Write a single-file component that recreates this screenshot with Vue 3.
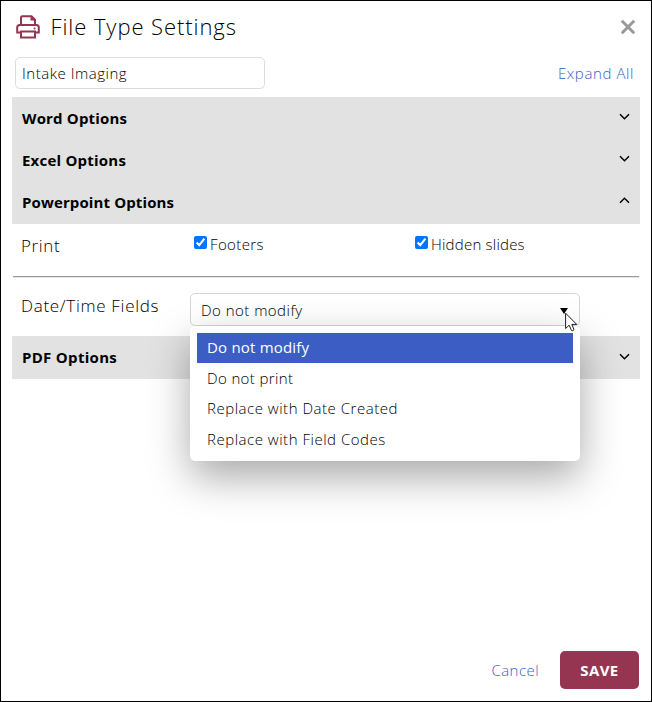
<script setup>
import { ref } from 'vue'

const profile = ref('Intake Imaging')
const footers = ref(true)
const hidden = ref(true)
const selected = ref('Do not modify')
const choices = [
  { label: 'Do not modify', cls: 'c-modify' },
  { label: 'Do not print', cls: 'c-print' },
  { label: 'Replace with Date Created', cls: 'c-date' },
  { label: 'Replace with Field Codes', cls: 'c-codes' },
]
const sections = [
  { title: 'Word Options', cls: 's-word', open: false },
  { title: 'Excel Options', cls: 's-excel', open: false },
  { title: 'Powerpoint Options', cls: 's-ppt', open: true },
]
</script>

<template>
  <div class="dialog">
    <header class="head">
      <svg class="printer" width="24" height="24" viewBox="0 0 24 24" fill="none" stroke="#953551" stroke-width="2">
        <path d="M5 10V2.5Q5 1.2 6.3 1.2H15.5L19 4.7V10" />
        <path d="M14.5 1V5.5H19.5L15.5 1Z" fill="#953551" stroke="none" />
        <path d="M5 17.5H1.2V12.5Q1.2 10 3.7 10H20.3Q22.8 10 22.8 12.5V17.5H19" />
        <path d="M5 16.5H19V22.6H5Z" />
        <circle cx="18.6" cy="13.5" r="1" fill="#953551" stroke="none" />
      </svg>
      <h1><span>File Type Settings</span></h1>
      <svg class="close" width="16" height="16" viewBox="0 0 16 16" stroke="#999" stroke-width="3">
        <path d="M1.8 1.8L14.2 14.2M14.2 1.8L1.8 14.2" />
      </svg>
    </header>

    <div class="tools">
      <input v-model="profile" class="profile" type="text" />
      <a class="expand">Expand All</a>
    </div>

    <div class="groups">
      <div v-for="s in sections" :key="s.title" class="bar">
        <span :class="s.cls">{{ s.title }}</span>
        <svg width="11" height="7" viewBox="0 0 11 7" fill="none" stroke="#000" stroke-width="1.5">
          <path :d="s.open ? 'M1 5.7L5.5 1.3L10 5.7' : 'M1 1.3L5.5 5.7L10 1.3'" />
        </svg>
      </div>
    </div>

    <div class="row print">
      <span class="label l-print">Print</span>
      <label class="check first"><input v-model="footers" type="checkbox" /><span class="t-foot">Footers</span></label>
      <label class="check"><input v-model="hidden" type="checkbox" /><span class="t-hidden">Hidden slides</span></label>
    </div>
    <div class="rule"></div>
    <div class="row dates">
      <span class="label l-date">Date/Time Fields</span>
      <div class="select">
        <span class="c-modify">{{ selected }}</span>
        <svg class="caret" width="8" height="6" viewBox="0 0 8 6"><path d="M0 0H8L4 6Z" /></svg>
        <ul class="menu">
          <li v-for="c in choices" :key="c.label" :class="{ on: c.label === selected }">
            <span :class="c.cls">{{ c.label }}</span>
          </li>
        </ul>
        <svg class="pointer" width="13" height="20" viewBox="0 0 13 20" fill="#fff" stroke="#1c1c28" stroke-width="1">
          <path d="M.6 1.2V16.5L4.2 13.2L6.5 18.5Q7.7 19.3 9 17.6L6.8 12.4H11.7Z" />
        </svg>
      </div>
    </div>

    <div class="bar pdf">
      <span class="s-pdf">PDF Options</span>
      <svg width="11" height="7" viewBox="0 0 11 7" fill="none" stroke="#000" stroke-width="1.5">
        <path d="M1 1.3L5.5 5.7L10 1.3" />
      </svg>
    </div>

    <footer class="foot">
      <a class="cancel">Cancel</a>
      <button class="save">SAVE</button>
    </footer>
  </div>
</template>

<style>
body { margin: 0; background: #fff; }
</style>

<style scoped>
* { box-sizing: border-box; }
.dialog {
  width: 652px; height: 702px; border: 1px solid #000; background: #fff; color: #000;
  display: flex; flex-direction: column;
  font: 300 15px/20px "Open Sans", "Noto Sans", sans-serif;
  white-space: nowrap;
}
.head { height: 56px; display: flex; align-items: flex-start; padding: 14px 15px 0 15px; }
.printer { flex: none; }
h1 { margin: -5px 0 0 10.5px; font-weight: 300; font-size: 22px; line-height: 32px; flex: 1; letter-spacing: .92px; }
.close { margin: 4px 0 0; }
.tools { height: 40px; display: flex; justify-content: space-between; padding: 0 17px 0 14px; }
.profile {
  width: 250px; height: 32px; border: 1px solid #dcdcdc; border-radius: 5px; padding: 0 6px;
  font: inherit; color: #000; background: #fff; outline: none; letter-spacing: .52px;
}
.expand { color: #3c5dc4; padding-top: 6px; letter-spacing: .6px; }
.groups { margin: 0 11px; height: 127px; background: #e2e2e2; }
.bar {
  height: 42px; display: flex; justify-content: space-between; align-items: center;
  padding: 0 10px; font-weight: 700; background: #e2e2e2;
}
.bar svg { margin-top: -3px; }
.bar span { padding-bottom: 1px; }
.s-word { letter-spacing: .16px; }
.s-excel { letter-spacing: .22px; }
.s-ppt { letter-spacing: .12px; }
.s-pdf { letter-spacing: .3px; }
.row { display: flex; padding-left: 20px; }
.print { height: 52px; }
.label { width: 173px; font-size: 17px; line-height: 24px; flex: none; }
.l-print { padding-top: 10px; letter-spacing: .65px; }
.check { display: flex; align-items: flex-start; padding-top: 10px; }
.check.first { width: 221px; }
.check input { width: 13px; height: 13px; margin: 2px 3px 0 0; }
.t-foot { letter-spacing: .38px; }
.t-hidden { letter-spacing: .22px; }
.rule { height: 2px; margin: 0 12px; border-top: 1px solid #999; border-bottom: 1px solid #e6e6e6; }
.dates { height: 58px; }
.l-date { width: 169px; padding-top: 16px; letter-spacing: .7px; }
.select {
  position: relative; width: 390px; height: 33px; margin-top: 15px; border: 1px solid #d6d6d6; border-radius: 5px;
  display: flex; justify-content: space-between; align-items: center; padding: 1px 11px 0 10px;
}
.caret { margin-top: 1px; }
.menu {
  position: absolute; z-index: 2; left: -1px; top: 32px; width: 390px; height: 135px; margin: 0; padding: 7px;
  list-style: none; background: #fff; border-radius: 5px; box-shadow: 0 16px 40px rgba(0, 0, 0, .34);
}
.menu li { height: 30px; margin-bottom: .6px; padding: 4px 10px; }
.menu li.on { background: #3c5dc4; color: #fff; font-weight: 400; }
.c-modify { letter-spacing: .47px; }
.on .c-modify { letter-spacing: .2px; }
.c-print { letter-spacing: .37px; }
.c-date, .c-codes { letter-spacing: .52px; }
.pointer { position: absolute; z-index: 3; left: 374px; top: 18px; }
.pdf { height: 43px; margin: 0 11px; }
.foot { margin-top: auto; display: flex; justify-content: flex-end; align-items: center; padding: 0 12px 12px 0; gap: 21px; }
.cancel { color: #3c5dc4; letter-spacing: .45px; }
.save {
  width: 79px; height: 38px; border: 0; border-radius: 5px; padding: 0; background: #953551; color: #fff;
  font: 700 15px/20px "Open Sans", sans-serif; letter-spacing: .4px;
}
</style>
